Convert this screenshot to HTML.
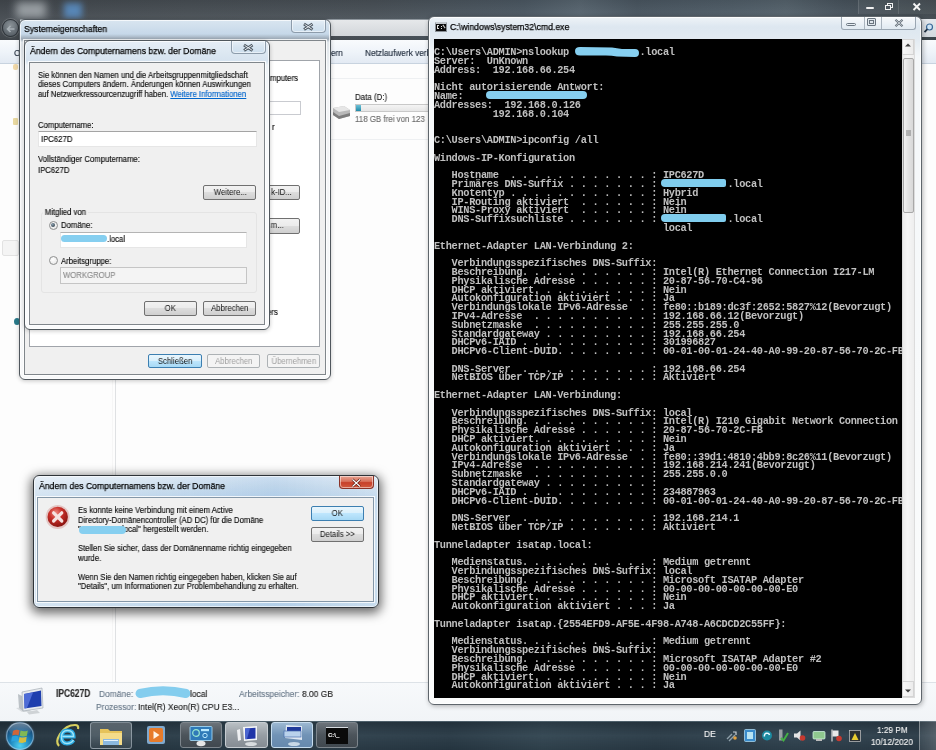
<!DOCTYPE html>
<html><head><meta charset="utf-8">
<style>
*{box-sizing:border-box;margin:0;padding:0}
html,body{width:936px;height:750px;overflow:hidden;background:#fdfdfd;font-family:"Liberation Sans",sans-serif;position:relative}
.a{position:absolute}
.t{position:absolute;white-space:pre;font-size:8.6px;letter-spacing:0;color:#0c0c0c;line-height:10px;transform-origin:0 0;transform:scaleX(.9);will-change:transform;-webkit-text-stroke:0.15px currentColor}
/* explorer */
#top{left:0;top:0;width:936px;height:40px;background:linear-gradient(180deg,rgba(0,0,0,.12) 0%,rgba(255,255,255,.04) 50%,rgba(0,0,0,.08) 100%),linear-gradient(90deg,#454b51 0%,#4a5157 20%,#4b535a 40%,#4e5b66 56%,#5b6974 62%,#4c5964 68%,#52606b 78%,#586670 84%,#4a5660 90%,#40494f 100%)}
#addr{left:20px;top:19px;width:916px;height:17px;background:linear-gradient(180deg,#e6e8ea,#d2d6da);border-top:1px solid #8e969d}
#cmdbar{left:0;top:40px;width:936px;height:24px;background:linear-gradient(180deg,#f9fbfd 0%,#eef3f9 55%,#e3eaf3 100%);border-bottom:1px solid #c8d3df}
#navsep{left:115px;top:64px;width:1px;height:618px;background:#dfe1e3;box-shadow:-3px 0 0 #f6f6f6}
#details{left:0;top:682px;width:936px;height:38.6px;background:linear-gradient(180deg,#f7f9fb,#f1f4f7);border-top:1px solid #dde2e7}
#taskbar{left:0;top:720.6px;width:936px;height:29.4px;background:linear-gradient(180deg,rgba(120,140,150,.7) 0px,rgba(0,0,0,.15) 1.5px,rgba(255,255,255,.03) 50%,rgba(0,0,0,.1) 100%),linear-gradient(90deg,#24343f 0%,#2a3c48 20%,#2e404c 35%,#283945 48%,#324551 58%,#2a3b47 70%,#304350 85%,#2a3a46 100%)}
/* cmd */
#cmd{left:427.5px;top:16px;width:494px;height:689px;border:1px solid #5f666c;border-radius:6px;background:linear-gradient(180deg,#eef3f7 0px,#dde7f0 10px,#e2eaf1 22px,#f4f7f9 40px,#fbfcfc 100%);box-shadow:1px 1px 5px rgba(0,0,0,.3),inset 0 0 0 1px rgba(255,255,255,.8)}
#con{left:433.5px;top:38.5px;width:468px;height:659.5px;background:#000;overflow:hidden}
#con pre{position:absolute;left:0.5px;top:9.3px;font-family:"Liberation Mono",monospace;font-weight:bold;font-size:10.3px;line-height:8.8px;color:#c0c0c0;letter-spacing:-0.31px;will-change:transform}
#sb{left:901.5px;top:38.5px;width:13px;height:659.5px;background:linear-gradient(90deg,#ececec,#f6f6f6 40%,#eeeeee);border:1px solid #dcdcdc}
/* dialogs */
.frame{position:absolute;border:1px solid #50575d;border-radius:6px;background:linear-gradient(180deg,#e6eef6 0px,#d6e3ef 20px,#eef3f7 24px,#f7f9fb 60px,#fafbfc 100%);box-shadow:0 1px 4px rgba(0,0,0,.22),inset 0 0 0 1px rgba(255,255,255,.7)}
.client{position:absolute;background:#f0f0f0;border:1px solid #80868b;box-shadow:0 0 0 1px rgba(255,255,255,.8)}
.btn{position:absolute;border:1px solid #707070;border-radius:2px;background:linear-gradient(180deg,#f2f2f2 0%,#ebebeb 49%,#dddddd 50%,#cfcfcf 100%);font-size:8.6px;letter-spacing:0;color:#111;text-align:center;white-space:pre}
.btn i{font-style:normal;display:inline-block;transform:scaleX(.9);will-change:transform}
.btn.dis{border-color:#adb2b5;background:#f4f4f4;color:#a0a0a0}
.btn.def{border-color:#3c7fb1;background:linear-gradient(180deg,#eaf6fd 0%,#d9f0fc 49%,#bee6fd 50%,#a7d9f5 100%)}
.tb{position:absolute;background:#fff;border:1px solid #abadb3;border-top-color:#8b8f96}
.xb{position:absolute;border:1px solid #8d9cab;border-top:none;border-radius:0 0 4px 4px;background:linear-gradient(180deg,#e6eff7,#d6e4f0 50%,#cddfee);box-shadow:inset 0 0 0 1px rgba(255,255,255,.5)}
.cap{font-size:9.3px;letter-spacing:0;color:#000;transform:scaleX(.935);-webkit-text-stroke:0.25px #000}
.radio{position:absolute;width:9px;height:9px;border-radius:50%;border:1px solid #8e8f8f;background:radial-gradient(circle at 40% 35%,#fff,#e2e2e2)}
.radio.on::after{content:"";position:absolute;left:1.5px;top:1.5px;width:4px;height:4px;border-radius:50%;background:radial-gradient(circle at 40% 35%,#8aa0b0,#1e2a34)}
.xb.red{border-color:#8a3328;background:linear-gradient(180deg,#e8a493 0%,#d7705a 45%,#c7402a 55%,#d25a3e 100%)}
.tbtn{border:1px solid rgba(170,180,190,.55);border-radius:3px;background:linear-gradient(180deg,rgba(255,255,255,.28),rgba(255,255,255,.1) 50%,rgba(255,255,255,.05))}
.bl{background:#86cff0;border-radius:4px;filter:blur(0.6px)}
</style></head><body><div id="wrap" style="position:absolute;left:0;top:0;width:936px;height:750px;overflow:hidden;filter:blur(0.3px)">
<!-- Explorer background -->
<div id="top" class="a"></div>
<div id="addr" class="a"></div>
<div class="a" style="left:16px;top:2px;width:30px;height:16px;background:#b4babe;filter:blur(4px);opacity:.75"></div>
<div class="a" style="left:64px;top:3px;width:18px;height:15px;background:#5a90c8;filter:blur(3px);opacity:.85"></div>
<div class="a" style="left:920px;top:19px;width:16px;height:18px;background:linear-gradient(180deg,#e4e8ec,#d4d9de);border-left:1px solid #9aa2aa"></div>
<svg class="a" style="left:921px;top:22px" width="14" height="12"><circle cx="8.5" cy="5" r="3" fill="#cfe4f4" stroke="#3a6a98" stroke-width="1.2"/><path d="M6.4 7.2 L3.5 10.2" stroke="#203040" stroke-width="1.8"/></svg>
<div class="a" style="left:857.5px;top:0;width:78.5px;height:14px;background:rgba(255,255,255,.05)"></div>
<div class="a" style="left:857.5px;top:0;width:1px;height:14px;background:rgba(255,255,255,.12)"></div>
<div class="a" style="left:898px;top:0;width:1px;height:14px;background:rgba(255,255,255,.12)"></div>
<div class="a" style="left:865.5px;top:6.5px;width:8px;height:2.2px;background:#f2f2f2;border-radius:1px"></div>
<div class="a" style="left:887px;top:2.5px;width:6px;height:5.5px;border:1.2px solid #f2f2f2"></div>
<div class="a" style="left:885px;top:4.5px;width:6px;height:5.5px;border:1.4px solid #f2f2f2;background:#4d565e"></div>
<svg class="a" style="left:910px;top:1px" width="14" height="11"><path d="M3.5 2.5 L10 9 M10 2.5 L3.5 9" stroke="#f4f4f4" stroke-width="1.9"/></svg>
<div class="a" style="left:2px;top:19px;width:17px;height:18px;border-radius:50%;background:radial-gradient(circle at 50% 35%,#8a9298,#5d656c 70%,#454c53);border:1px solid #2e343a;box-shadow:0 0 0 1px rgba(255,255,255,.15)"></div>
<svg class="a" style="left:5px;top:23.5px" width="12" height="10"><path d="M9.5 5 H3 M5.5 2 L2.5 5 L5.5 8" stroke="#a8b0b6" stroke-width="1.6" fill="none"/></svg>
<div id="cmdbar" class="a"></div>
<div class="t" style="left:14px;top:48px;font-size:9.2px;color:#1e2a3a">Organisieren</div>
<div class="t" style="left:364.5px;top:48px;font-size:9.2px;color:#1e2a3a">Netzlaufwerk verbinden</div>
<div class="t" style="left:331.3px;top:48px;font-size:9px;color:#1e2a3a">ern</div>
<div id="navsep" class="a"></div>
<div class="a" style="left:13px;top:64px;width:5px;height:6px;background:#f0d8a8;border-radius:2px;filter:blur(.6px)"></div>
<div class="a" style="left:13px;top:118px;width:5px;height:7px;background:#e8d8a0;border-radius:1px;filter:blur(.6px)"></div>
<div class="a" style="left:2px;top:240px;width:17px;height:16px;background:#f4f4f4;border:1px solid #e2e2e2;border-radius:2px"></div>
<div class="a" style="left:14px;top:318px;width:6px;height:7px;background:#2a7a8a;border-radius:50%;filter:blur(.5px)"></div>
<div class="a" style="left:331px;top:78px;width:97px;height:1px;background:#eef0f2"></div>
<div class="a" style="left:331px;top:139px;width:97px;height:1px;background:#eef0f2"></div>
<div class="t" style="left:355px;top:91.5px;font-size:8.8px;color:#1a1a1a">Data (D:)</div>
<div class="a" style="left:355px;top:103.5px;width:73px;height:8.5px;border:1px solid #c8c8c8;border-right:none;background:linear-gradient(180deg,#f4f4f4,#e6e6e6)"></div>
<div class="a" style="left:356px;top:104.5px;width:5px;height:6.5px;background:linear-gradient(180deg,#6fc2d8,#1f8aa8)"></div>
<div class="t" style="left:355px;top:114.3px;font-size:8.8px;color:#6d6d6d">118 GB frei von 123</div>
<svg class="a" style="left:331px;top:103px" width="20" height="20"><path d="M2 5 L13 3 L19 7 L19 13 L8 16 L2 12 Z" fill="#b9b9b9"/><path d="M2 12 L8 16 L19 13 L19 10 L8 13 L2 9 Z" fill="#7d7d7d"/><path d="M2 5 L13 3 L19 7 L8 9 Z" fill="#e6e6e6"/></svg>
<div id="details" class="a"></div>
<svg class="a" style="left:13px;top:686px" width="34" height="30"><path d="M3 22 L9 26 L20 26 L12 21 Z" fill="#d8dcdf"/><path d="M5 8 L6 22 L10 25 L9 10 Z" fill="#bcc2c7"/><path d="M9 6 L29 2 L30 22 L10 25 Z" fill="#e9ecef" stroke="#9aa3ab" stroke-width=".6"/><path d="M11 8 L28 4.5 L28.5 20 L11.5 22.5 Z" fill="#1f3fae"/><path d="M11 8 L20 6.5 L14 22 L11.5 22.5 Z" fill="#5a78e0" opacity=".8"/><path d="M14 26 L24 24 L27 27 L16 28.5 Z" fill="#cfd3d6"/></svg>
<div class="t" style="left:56px;top:687.8px;font-size:10.6px;font-weight:bold;color:#2a2a2a;transform:scaleX(.8)">IPC627D</div>
<div class="t" style="left:99px;top:688.5px;font-size:9.4px;color:#6b7b8b">Domäne:</div>
<svg class="a" style="left:130px;top:680px" width="68" height="24"><path d="M10 13.5 Q33 8 56 13.5" stroke="#84cdee" stroke-width="9" stroke-linecap="round" fill="none" style="filter:blur(.5px)"/></svg>
<div class="t" style="left:190px;top:688.5px;font-size:9.4px;color:#222">local</div>
<div class="t" style="left:238.5px;top:688.5px;font-size:9.4px;color:#6b7b8b">Arbeitsspeicher:</div>
<div class="t" style="left:302px;top:688.5px;font-size:9.4px;color:#222">8.00 GB</div>
<div class="t" style="left:96px;top:701.8px;font-size:9.4px;color:#6b7b8b">Prozessor:</div>
<div class="t" style="left:138px;top:701.8px;font-size:9.4px;color:#222">Intel(R) Xeon(R) CPU E3...</div>
<div id="taskbar" class="a"></div>
<!-- start orb -->
<div class="a" style="left:6px;top:721.5px;width:28px;height:28px;border-radius:50%;background:radial-gradient(circle at 50% 85%,#4fd0f0 0%,#1f88c0 35%,#17507e 65%,#1a3048 100%);box-shadow:inset 0 0 0 1.2px rgba(190,215,235,.55),0 0 2px rgba(150,200,240,.4)"></div>
<div class="a" style="left:9px;top:723px;width:22px;height:11px;border-radius:11px 11px 6px 6px;background:linear-gradient(180deg,rgba(255,255,255,.35),rgba(255,255,255,.05))"></div>
<svg class="a" style="left:11px;top:727px" width="19" height="18"><path d="M2 4 Q5 2 8.5 3.3 L7.6 8.4 Q4.5 7.2 1.2 8.6 Z" fill="#e0642c" opacity=".9"/><path d="M9.6 3.6 Q13 5 16.8 3.4 L15.9 8.7 Q12.4 10.2 8.7 8.8 Z" fill="#8cc04a" opacity=".9"/><path d="M1 9.6 Q4.3 8.2 7.4 9.4 L6.5 14.6 Q3.4 13.3 0.2 14.8 Z" fill="#2aa4e0" opacity=".9"/><path d="M8.5 9.9 Q12.2 11.3 15.7 9.8 L14.9 15.1 Q11.3 16.6 7.6 15.2 Z" fill="#e8c030" opacity=".9"/></svg>
<!-- IE -->
<svg class="a" style="left:53px;top:722px" width="28" height="27"><path d="M6 24 Q2 20 7 12 Q13 3 22 3 Q26 3 25 7" fill="none" stroke="#d8d060" stroke-width="2.2"/><path d="M20.5 18 Q18 21.5 14 21.5 Q8.5 21.5 8.5 15 Q8.5 8.5 14.5 8.5 Q20.5 8.5 20.5 14.5 L9.5 14.5" fill="none" stroke="#2aa8e0" stroke-width="4.2"/><path d="M20.5 18 Q18 21.5 14 21.5 Q8.5 21.5 8.5 15 Q8.5 8.5 14.5 8.5 Q20.5 8.5 20.5 14.5 L9.5 14.5" fill="none" stroke="#9ee4f8" stroke-width="1.4"/></svg>
<!-- explorer pinned -->
<div class="a" style="left:89.5px;top:722px;width:42.5px;height:26.5px;border:1px solid rgba(190,200,210,.55);border-radius:3px;background:linear-gradient(180deg,rgba(255,255,255,.25),rgba(255,255,255,.08))"></div>
<svg class="a" style="left:98px;top:725px" width="26" height="22"><path d="M2 4 H10 L12 6 H24 V20 H2 Z" fill="#e6c35a"/><path d="M2 8 H24 V20 H2 Z" fill="#f4dc8a"/><rect x="5" y="14" width="16" height="6" fill="#8bb8e0"/><rect x="6" y="15" width="14" height="1" fill="#e8f4ff"/></svg>
<!-- media player -->
<svg class="a" style="left:144px;top:723px" width="24" height="24"><rect x="3" y="3" width="18" height="18" rx="2" fill="#7fa9cf"/><rect x="5" y="5" width="14" height="14" rx="2" fill="#e77b2a"/><path d="M9.5 8 L15.5 12 L9.5 16 Z" fill="#fff6e8"/></svg>
<!-- running buttons -->
<div class="a tbtn" style="left:180px;top:722.3px;width:42px;height:26px;background:linear-gradient(180deg,#6c737a,#4c545b 50%,#40484f);border-color:#7d858c"></div>
<div class="a tbtn" style="left:225px;top:722.3px;width:42.6px;height:26px;background:linear-gradient(180deg,#b9bfc4,#979ea4 50%,#858c93);border-color:#c6ccd1"></div>
<div class="a tbtn" style="left:271px;top:722.3px;width:42px;height:26px;background:linear-gradient(180deg,#9cb8d2,#7193b6 50%,#6689ad);border-color:#c6dcee"></div>
<div class="a tbtn" style="left:315.8px;top:722.3px;width:42.2px;height:26px;background:linear-gradient(180deg,#6c737a,#4c545b 50%,#40484f);border-color:#7d858c"></div>
<svg class="a" style="left:188px;top:725px" width="26" height="22"><rect x="2" y="1.5" width="22" height="14" rx="1" fill="#2f7ab8" stroke="#9fd4f2" stroke-width=".9"/><circle cx="8" cy="8" r="3.3" fill="none" stroke="#9ae8d0" stroke-width="1.2"/><rect x="13" y="4" width="8" height="2.2" fill="#b8e8ff"/><circle cx="17" cy="10.5" r="2.2" fill="none" stroke="#b8e8ff" stroke-width="1"/><ellipse cx="13" cy="18.5" rx="4.5" ry="2.8" fill="#e6e6e6"/></svg>
<svg class="a" style="left:232px;top:724px" width="30" height="23"><path d="M5 6 L8 5 L9 16 L6 17 Z" fill="#eef0f2"/><path d="M11 3 L25 2 L25 16 L12 17 Z" fill="#f2f4f6"/><path d="M13 4.5 L23.5 3.8 L23.5 14.5 L13.5 15.3 Z" fill="#2035a8"/><path d="M13 4.5 L18 4.2 L15 15 L13.5 15.3 Z" fill="#4a66d0"/><ellipse cx="19" cy="20" rx="6" ry="2" fill="#d8dcdf"/></svg>
<svg class="a" style="left:278px;top:724px" width="30" height="23"><path d="M8 1 L24 2 L24 16 L7 14 Z" fill="#dfe8f2"/><rect x="9" y="3" width="14" height="4" fill="#1f3a9a"/><rect x="6" y="7" width="17" height="6" fill="#b9d2ec" stroke="#4a70b0" stroke-width=".7"/><ellipse cx="16" cy="20" rx="6" ry="2" fill="#c8d8e6"/></svg>
<div class="a" style="left:325.5px;top:726.5px;width:22px;height:17px;background:#0a0a0a;border-top:1.5px solid #d8dde2"></div>
<div class="t" style="left:328px;top:729.5px;font-size:6px;color:#eee;font-weight:bold;transform:none">C:\_</div>
<!-- tray -->
<div class="t" style="left:704px;top:729px;font-size:9.6px;color:#f0f0f0;transform:scaleX(.88)">DE</div>
<svg class="a" style="left:724px;top:728px" width="140" height="15">
<path d="M3 11 L8 6 M5 13 L11 7" stroke="#8fa0aa" stroke-width="1.4"/><path d="M9 4 L12 4 L12 7" stroke="#c8d0d6" stroke-width="1.2" fill="none"/><circle cx="11" cy="10" r="1.8" fill="#e0a040"/>
<rect x="20.5" y="1.5" width="11" height="12" rx="1" fill="#3a8ccc" stroke="#a8d4ee" stroke-width=".8"/><rect x="23" y="4" width="6" height="7" fill="#b8e4f4"/>
<circle cx="43" cy="7.5" r="5" fill="#1b8aa0"/><path d="M40.5 8.5 A2.6 2.6 0 1 1 45.5 7" stroke="#e8f8ff" stroke-width="1.5" fill="none"/>
<rect x="55" y="1.5" width="3.5" height="11" fill="#9aa0a4"/><path d="M57 10 L59.5 12.5 L64 5" stroke="#44b044" stroke-width="2" fill="none"/>
<path d="M70 5.5 H73 L76.5 2.5 V12.5 L73 9.5 H70 Z" fill="#e4e4e4"/><circle cx="78.5" cy="10" r="2.8" fill="#c83a30"/>
<rect x="89" y="3.5" width="12" height="7.5" rx="1" fill="#8fc88f" stroke="#dfe" stroke-width=".7"/><rect x="92" y="11" width="6" height="2" fill="#bbb"/>
<path d="M108 1.5 V13.5" stroke="#e8e8e8" stroke-width="1.1"/><path d="M108.5 2.5 H114.5 V8.5 H108.5 Z" fill="#e8e8e8"/><circle cx="115" cy="10.5" r="2.8" fill="#c83a30"/>
<rect x="125.5" y="2.5" width="11" height="11" fill="#2a2f33" stroke="#c8c8c8" stroke-width=".7"/><path d="M127.5 12 L131 5 L134.5 12 Z" fill="#e8cc30"/>
</svg>
<div class="t" style="left:877px;top:724.5px;font-size:9.6px;color:#f2f2f2;transform:scaleX(.86)">1:29 PM</div>
<div class="t" style="left:871.3px;top:736.5px;font-size:9.6px;color:#f2f2f2;transform:scaleX(.875)">10/12/2020</div>
<div class="a" style="left:918.5px;top:721px;width:17.5px;height:29px;border-left:1px solid rgba(255,255,255,.3);background:linear-gradient(90deg,rgba(255,255,255,.08),rgba(255,255,255,.18))"></div>

<!-- cmd window -->
<div id="cmd" class="a"></div>
<div id="con" class="a"><pre>C:\Users\ADMIN&gt;nslookup            .local
Server:  UnKnown
Address:  192.168.66.254

Nicht autorisierende Antwort:
Name:
Addresses:  192.168.0.126
          192.168.0.104


C:\Users\ADMIN&gt;ipconfig /all

Windows-IP-Konfiguration

   Hostname  . . . . . . . . . . . . : IPC627D
   Primäres DNS-Suffix . . . . . . . :            .local
   Knotentyp . . . . . . . . . . . . : Hybrid
   IP-Routing aktiviert  . . . . . . : Nein
   WINS-Proxy aktiviert  . . . . . . : Nein
   DNS-Suffixsuchliste . . . . . . . :            .local
                                       local

Ethernet-Adapter LAN-Verbindung 2:

   Verbindungsspezifisches DNS-Suffix: 
   Beschreibung. . . . . . . . . . . : Intel(R) Ethernet Connection I217-LM
   Physikalische Adresse . . . . . . : 20-87-56-70-C4-96
   DHCP aktiviert. . . . . . . . . . : Nein
   Autokonfiguration aktiviert . . . : Ja
   Verbindungslokale IPv6-Adresse  . : fe80::b189:dc3f:2652:5827%12(Bevorzugt)
   IPv4-Adresse  . . . . . . . . . . : 192.168.66.12(Bevorzugt)
   Subnetzmaske  . . . . . . . . . . : 255.255.255.0
   Standardgateway . . . . . . . . . : 192.168.66.254
   DHCPv6-IAID . . . . . . . . . . . : 301996827
   DHCPv6-Client-DUID. . . . . . . . : 00-01-00-01-24-40-A0-99-20-87-56-70-2C-FB

   DNS-Server  . . . . . . . . . . . : 192.168.66.254
   NetBIOS über TCP/IP . . . . . . . : Aktiviert

Ethernet-Adapter LAN-Verbindung:

   Verbindungsspezifisches DNS-Suffix: local
   Beschreibung. . . . . . . . . . . : Intel(R) I210 Gigabit Network Connection
   Physikalische Adresse . . . . . . : 20-87-56-70-2C-FB
   DHCP aktiviert. . . . . . . . . . : Nein
   Autokonfiguration aktiviert . . . : Ja
   Verbindungslokale IPv6-Adresse  . : fe80::39d1:4810:4bb9:8c26%11(Bevorzugt)
   IPv4-Adresse  . . . . . . . . . . : 192.168.214.241(Bevorzugt)
   Subnetzmaske  . . . . . . . . . . : 255.255.0.0
   Standardgateway . . . . . . . . . : 
   DHCPv6-IAID . . . . . . . . . . . : 234887963
   DHCPv6-Client-DUID. . . . . . . . : 00-01-00-01-24-40-A0-99-20-87-56-70-2C-FB

   DNS-Server  . . . . . . . . . . . : 192.168.214.1
   NetBIOS über TCP/IP . . . . . . . : Aktiviert

Tunneladapter isatap.local:

   Medienstatus. . . . . . . . . . . : Medium getrennt
   Verbindungsspezifisches DNS-Suffix: local
   Beschreibung. . . . . . . . . . . : Microsoft ISATAP Adapter
   Physikalische Adresse . . . . . . : 00-00-00-00-00-00-00-E0
   DHCP aktiviert. . . . . . . . . . : Nein
   Autokonfiguration aktiviert . . . : Ja

Tunneladapter isatap.{2554EFD9-AF5E-4F98-A748-A6CDCD2C55FF}:

   Medienstatus. . . . . . . . . . . : Medium getrennt
   Verbindungsspezifisches DNS-Suffix:
   Beschreibung. . . . . . . . . . . : Microsoft ISATAP Adapter #2
   Physikalische Adresse . . . . . . : 00-00-00-00-00-00-00-E0
   DHCP aktiviert. . . . . . . . . . : Nein
   Autokonfiguration aktiviert . . . : Ja</pre></div>
<svg class="a" style="left:572px;top:45px" width="70" height="14"><path d="M3 6 Q3 2 8 2 L40 2.5 Q45 3 50 4 L63 4 Q67 4 67 8 Q67 12 63 12 L45 11.5 Q38 10 30 10.5 L8 10.5 Q3 10.5 3 6 Z" fill="#86cff0" style="filter:blur(.6px)"/></svg>
<div class="a bl" style="left:486px;top:90.5px;width:100.5px;height:8.6px;border-radius:4px;background:#86cff0"></div>
<div class="a bl" style="left:661px;top:179px;width:65px;height:8px;border-radius:4px 2px 2px 4px;background:#80cdee"></div>
<div class="a bl" style="left:661px;top:214px;width:65px;height:8px;border-radius:4px 2px 2px 4px;background:#80cdee"></div>
<div id="sb" class="a"></div>
<div class="a" style="left:435px;top:22px;width:12px;height:10px;background:#0c0c0c;border:1px solid #8a9096;border-top:2px solid #c2c8ce"></div>
<div class="a" style="left:437px;top:25px;width:2px;height:4px;border:1px solid #e0e0e0;border-right:none"></div>
<div class="a" style="left:440.5px;top:25.5px;width:1px;height:1px;background:#e0e0e0;box-shadow:0 2px 0 #e0e0e0"></div>
<div class="a" style="left:442px;top:26px;width:4px;height:1px;background:#d0d0d0;transform:rotate(55deg)"></div>
<div class="t cap" style="left:450px;top:22px">C:\windows\system32\cmd.exe</div>
<div class="a" style="left:841px;top:16.5px;width:74.5px;height:13px;border:1px solid #9aa6b2;border-top:none;border-radius:0 0 3px 3px;background:linear-gradient(180deg,rgba(255,255,255,.5),rgba(255,255,255,.15))"></div>
<div class="a" style="left:864px;top:16.5px;width:1px;height:12px;background:#aab4be"></div>
<div class="a" style="left:880.5px;top:16.5px;width:1px;height:12px;background:#aab4be"></div>
<div class="a" style="left:846px;top:22.5px;width:10px;height:3px;border:1px solid #6a7580;border-radius:1.5px;background:#e8eef3"></div>
<div class="a" style="left:866.5px;top:18px;width:9px;height:8px;border:1px solid #6a7580;border-radius:1px;background:#dfe6ec"></div>
<div class="a" style="left:868.5px;top:20px;width:5px;height:4px;border:1px solid #6a7580;border-top-width:1.5px"></div>
<svg class="a" style="left:893px;top:18px" width="12" height="10"><path d="M2.5 1.8 L9.5 8.2 M9.5 1.8 L2.5 8.2" stroke="#5f6a74" stroke-width="2.2"/><path d="M2.5 1.8 L9.5 8.2 M9.5 1.8 L2.5 8.2" stroke="#e9eef2" stroke-width="0.7"/></svg>
<div class="a" style="left:902px;top:39px;width:12px;height:16px;background:linear-gradient(90deg,#f8f8f8,#ececec);border:1px solid #d4d4d4"></div>
<svg class="a" style="left:904px;top:42px" width="8" height="6"><path d="M1 4.5 L4 1.5 L7 4.5 Z" fill="#404040"/></svg>
<div class="a" style="left:902.5px;top:57.5px;width:11px;height:155px;border:1px solid #a8a8a8;border-radius:2px;background:linear-gradient(90deg,#f2f2f2,#e4e4e4 45%,#d8d8d8)"></div>
<svg class="a" style="left:904.5px;top:130px" width="7" height="6"><path d="M1 1 H6 M1 3 H6 M1 5 H6" stroke="#666" stroke-width="0.8"/></svg>
<div class="a" style="left:902px;top:681px;width:12px;height:16px;background:linear-gradient(90deg,#f8f8f8,#ececec);border:1px solid #d4d4d4"></div>
<svg class="a" style="left:904px;top:688px" width="8" height="6"><path d="M1 1.5 L4 4.5 L7 1.5 Z" fill="#404040"/></svg>

<!-- Systemeigenschaften -->
<div class="frame" style="left:18.5px;top:18.5px;width:312px;height:361.5px;background:linear-gradient(180deg,#d9e5f0 0px,#c6d8e9 14px,#9ba8b4 19px,#dfe5ea 22px,#f3f5f7 60px,#f8f9fa 100%)"></div>
<div class="t cap" style="left:23.8px;top:24.3px">Systemeigenschaften</div>
<div class="xb" style="left:291px;top:19.5px;width:35px;height:13px"><svg width="35" height="13" class="a" style="left:-1px;top:0"><path d="M13 4 L21.5 9.5 M21.5 4 L13 9.5" stroke="#4f5a64" stroke-width="3"/><path d="M13.6 4.4 L20.9 9.1 M20.9 4.4 L13.6 9.1" stroke="#e8eef4" stroke-width="1"/></svg></div>
<div class="client" style="left:23.5px;top:39.6px;width:302.3px;height:335.2px"></div>
<div class="a" style="left:28.6px;top:60px;width:291px;height:286.5px;background:#fff;border:1px solid #a0a4aa"></div>
<div class="t" style="left:270px;top:72.8px">mputers</div>
<div class="tb" style="left:200px;top:100.6px;width:100.6px;height:14.7px;border-color:#c9cbd0"></div>
<div class="t" style="left:271.5px;top:121.7px">r</div>
<div class="btn" style="left:200px;top:185px;width:100px;height:15px;line-height:13px;text-align:right;padding-right:6px"><i>k-ID...</i></div>
<div class="btn" style="left:200px;top:218.4px;width:100px;height:15.2px;line-height:13px;text-align:right;padding-right:15px"><i>m...</i></div>
<div class="t" style="left:266.5px;top:307px">ers</div>
<div class="btn def" style="left:148.4px;top:353.5px;width:53.4px;height:14.6px;line-height:12.6px"><i>Schließen</i></div>
<div class="btn dis" style="left:207.4px;top:353.5px;width:52.7px;height:14.6px;line-height:12.6px"><i>Abbrechen</i></div>
<div class="btn dis" style="left:267.3px;top:353.5px;width:53px;height:14.6px;line-height:12.6px"><i>Übernehmen</i></div>

<!-- Inner dialog -->
<div class="frame" style="left:24.2px;top:40.2px;width:246.1px;height:290.3px"></div>
<div class="t cap" style="left:30.3px;top:46.3px">Ändern des Computernamens bzw. der Domäne</div>
<div class="xb" style="left:231px;top:41.2px;width:34.6px;height:13px"><svg width="35" height="13" class="a" style="left:-1px;top:0"><path d="M13 4 L21.5 9.5 M21.5 4 L13 9.5" stroke="#4f5a64" stroke-width="3"/><path d="M13.6 4.4 L20.9 9.1 M20.9 4.4 L13.6 9.1" stroke="#e8eef4" stroke-width="1"/></svg></div>
<div class="client" style="left:29.3px;top:61.5px;width:235.5px;height:263.2px"></div>
<div class="t" style="left:38.2px;top:70.6px;line-height:9.4px">Sie können den Namen und die Arbeitsgruppenmitgliedschaft
dieses Computers ändern. Änderungen können Auswirkungen
auf Netzwerkressourcenzugriff haben. <span style="color:#0066cc;text-decoration:underline">Weitere Informationen</span></div>
<div class="t" style="left:38.2px;top:120.3px">Computername:</div>
<div class="tb" style="left:38.2px;top:131.3px;width:219px;height:15.6px;border-color:#e6e6e6;border-top-color:#a4a4a4"></div>
<div class="t" style="left:40.8px;top:134.1px">IPC627D</div>
<div class="t" style="left:38.2px;top:153.7px">Vollständiger Computername:</div>
<div class="t" style="left:38.2px;top:164.5px">IPC627D</div>
<div class="btn" style="left:203.4px;top:185.1px;width:52.9px;height:14.5px;line-height:12.5px"><i>Weitere...</i></div>
<div class="a" style="left:41px;top:212px;width:216.4px;height:80.5px;border:1px solid #e4e4e4;border-radius:3px"></div>
<div class="t" style="left:43px;top:207px;background:#f0f0f0;padding:0 2px">Mitglied von</div>
<div class="radio on" style="left:48.5px;top:220.7px"></div>
<div class="t" style="left:61px;top:220.3px">Domäne:</div>
<div class="tb" style="left:59.7px;top:231.6px;width:187px;height:16px;border-color:#e6e6e6;border-top-color:#b4b4b4"></div>
<div class="a bl" style="left:60.5px;top:235px;width:46px;height:7px"></div>
<div class="t" style="left:107.3px;top:233.6px">.local</div>
<div class="radio" style="left:48.5px;top:256px"></div>
<div class="t" style="left:61px;top:255.6px">Arbeitsgruppe:</div>
<div class="tb" style="left:59.7px;top:267.1px;width:187px;height:16.9px;background:#f4f4f4;border-color:#c5c5c5"></div>
<div class="t" style="left:63px;top:269.5px;color:#8d8d8d">WORKGROUP</div>
<div class="btn" style="left:143.9px;top:301px;width:53.4px;height:15px;line-height:13px"><i>OK</i></div>
<div class="btn" style="left:203.4px;top:301px;width:52.9px;height:15px;line-height:13px"><i>Abbrechen</i></div>

<!-- Error dialog -->
<div class="frame" style="left:32.5px;top:475px;width:346.5px;height:133px;border-color:#2f3439;background:linear-gradient(90deg,rgba(255,255,255,.3),rgba(255,255,255,0) 35%,rgba(90,150,210,.15) 70%,rgba(255,255,255,.1)),linear-gradient(180deg,#dfeaf5 0px,#cfe0ef 10px,#c0d7ec 21px,#c6dbee 40px,#c3d9ec 100%);box-shadow:0 3px 11px 2px rgba(0,0,0,.6),inset 0 0 0 1px rgba(255,255,255,.6)"></div>
<div class="t cap" style="left:38.6px;top:481.2px">Ändern des Computernamens bzw. der Domäne</div>
<div class="xb red" style="left:339px;top:476px;width:34.6px;height:13.4px"><svg width="35" height="14" class="a" style="left:-1px;top:0"><path d="M13.5 3.5 L21 10.5 M21 3.5 L13.5 10.5" stroke="#5a1a12" stroke-width="2.4"/><path d="M13.5 3.5 L21 10.5 M21 3.5 L13.5 10.5" stroke="#fff" stroke-width="1.1"/></svg></div>
<div class="client" style="left:37.2px;top:497px;width:336.8px;height:105px;border-color:#8497a8"></div>
<svg class="a" style="left:45px;top:504px" width="26" height="26"><defs><radialGradient id="rg" cx="40%" cy="30%" r="70%"><stop offset="0" stop-color="#f08a80"/><stop offset="0.45" stop-color="#c8302a"/><stop offset="1" stop-color="#8a1410"/></radialGradient></defs><circle cx="12.7" cy="12.9" r="12" fill="#e4c6c4"/><circle cx="12.7" cy="12.9" r="10.2" fill="url(#rg)"/><path d="M8.6 8.8 L16.8 17 M16.8 8.8 L8.6 17" stroke="#f6e2e0" stroke-width="3.2" stroke-linecap="round"/></svg>
<div class="t" style="left:77.7px;top:505.6px;line-height:9.55px">Es konnte keine Verbindung mit einem Active
Directory-Domänencontroller (AD DC) für die Domäne
"<span style="display:inline-block;width:46px"></span>local" hergestellt werden.

Stellen Sie sicher, dass der Domänenname richtig eingegeben
wurde.

Wenn Sie den Namen richtig eingegeben haben, klicken Sie auf
"Details", um Informationen zur Problembehandlung zu erhalten.</div>
<div class="a bl" style="left:79px;top:526px;width:47px;height:7.5px"></div>
<div class="btn def" style="left:311px;top:506.4px;width:53px;height:14.2px;line-height:12.2px"><i>OK</i></div>
<div class="btn" style="left:311px;top:527px;width:53px;height:15px;line-height:13px"><i>Details &gt;&gt;</i></div>

</div></body></html>
